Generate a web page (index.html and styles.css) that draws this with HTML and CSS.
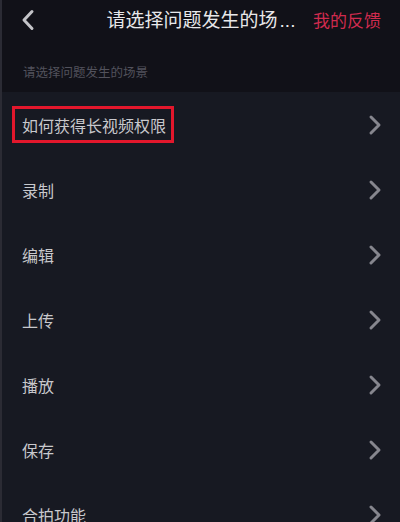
FILE: index.html
```html
<!DOCTYPE html>
<html lang="zh-CN">
<head>
<meta charset="utf-8">
<link rel="stylesheet" href="styles.css">
</head>
<body>
<div class="app">
  <header class="topbar">
    <div class="left">
      <svg class="back" width="14" height="22" viewBox="0 0 14 22"><path d="M11 2.5 L3 11 L11 19.5" fill="none" stroke="#c4c4c8" stroke-width="3" stroke-linecap="round" stroke-linejoin="round"/></svg>
    </div>
    <div class="title">请选择问题发生的场<span class="dots">...</span></div>
    <div class="right"><span class="feedback">我的反馈</span></div>
  </header>
  <div class="sub">请选择问题发生的场景</div>
  <ul class="list">
    <li class="row"><span class="label marked">如何获得长视频权限</span><svg class="chev" width="14" height="22" viewBox="0 0 14 22"><path d="M3 3 L11 11 L3 19" fill="none" stroke="#86868e" stroke-width="3" stroke-linecap="round" stroke-linejoin="round"/></svg></li>
    <li class="row"><span class="label">录制</span><svg class="chev" width="14" height="22" viewBox="0 0 14 22"><path d="M3 3 L11 11 L3 19" fill="none" stroke="#86868e" stroke-width="3" stroke-linecap="round" stroke-linejoin="round"/></svg></li>
    <li class="row"><span class="label">编辑</span><svg class="chev" width="14" height="22" viewBox="0 0 14 22"><path d="M3 3 L11 11 L3 19" fill="none" stroke="#86868e" stroke-width="3" stroke-linecap="round" stroke-linejoin="round"/></svg></li>
    <li class="row"><span class="label">上传</span><svg class="chev" width="14" height="22" viewBox="0 0 14 22"><path d="M3 3 L11 11 L3 19" fill="none" stroke="#86868e" stroke-width="3" stroke-linecap="round" stroke-linejoin="round"/></svg></li>
    <li class="row"><span class="label">播放</span><svg class="chev" width="14" height="22" viewBox="0 0 14 22"><path d="M3 3 L11 11 L3 19" fill="none" stroke="#86868e" stroke-width="3" stroke-linecap="round" stroke-linejoin="round"/></svg></li>
    <li class="row"><span class="label">保存</span><svg class="chev" width="14" height="22" viewBox="0 0 14 22"><path d="M3 3 L11 11 L3 19" fill="none" stroke="#86868e" stroke-width="3" stroke-linecap="round" stroke-linejoin="round"/></svg></li>
    <li class="row"><span class="label">合拍功能</span><svg class="chev" width="14" height="22" viewBox="0 0 14 22"><path d="M3 3 L11 11 L3 19" fill="none" stroke="#86868e" stroke-width="3" stroke-linecap="round" stroke-linejoin="round"/></svg></li>
  </ul>
</div>
</body>
</html>
```
FILE: styles.css
```css
html, body {
  margin: 0;
  padding: 0;
  width: 400px;
  height: 522px;
  overflow: hidden;
  background: #171922;
  font-family: "Noto Sans CJK SC", "Noto Sans", sans-serif;
}
.app {
  width: 400px;
  height: 522px;
  box-sizing: border-box;
  border-left: 2px solid #2b2b34;
  display: flex;
  flex-direction: column;
  overflow: hidden;
}
.topbar {
  flex-shrink: 0;
  height: 40px;
  background: #111118;
  display: grid;
  grid-template-columns: 1fr auto 1fr;
  align-items: center;
}
.left {
  display: flex;
  align-items: center;
  padding-left: 19px;
}
.back { display: block; }
.title {
  color: #e8e8ea;
  font-size: 19px;
  line-height: 22px;
  white-space: nowrap;
}
.dots {
  font-family: "Liberation Sans", sans-serif;
  margin-left: 2px;
}
.right {
  display: flex;
  justify-content: flex-end;
  padding-right: 19px;
}
.feedback {
  color: #cf2b4e;
  font-size: 17px;
  line-height: 20px;
}
.sub {
  flex-shrink: 0;
  height: 52px;
  box-sizing: border-box;
  padding: 10px 0 0 21px;
  background: #111118;
  display: flex;
  align-items: center;
  color: #52525c;
  font-size: 12.5px;
}
.list {
  list-style: none;
  margin: 0;
  padding: 0;
  flex-shrink: 0;
}
.row {
  height: 65px;
  box-sizing: border-box;
  padding: 0 18px 0 20px;
  display: flex;
  align-items: center;
  justify-content: space-between;
}
.label {
  color: #c8c8cc;
  font-size: 16px;
  line-height: 18px;
}
.marked {
  position: relative;
}
.marked::before {
  content: "";
  position: absolute;
  left: -10px;
  right: -8px;
  top: -10px;
  bottom: -9px;
  border: 3.5px solid #e2172c;
}
.chev { display: block; }
```
